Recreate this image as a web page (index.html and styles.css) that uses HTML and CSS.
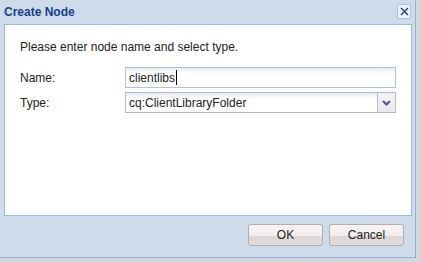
FILE: index.html
```html
<!DOCTYPE html>
<html lang="en">
<head>
  <meta charset="UTF-8">
  <title>Create Node</title>
  <link rel="stylesheet" href="styles.css">
</head>
<body>
  <div class="window">
    <div class="window-header">
      <span class="window-title">Create Node</span>
      <span class="close-btn">
        <svg width="9" height="9" viewBox="0 0 9 9">
          <path d="M1 1 L8 8 M8 1 L1 8" stroke="#15428b" stroke-width="1.4" fill="none"/>
        </svg>
      </span>
    </div>

    <div class="panel">
      <p class="intro">Please enter node name and select type.</p>
      <div class="form-row">
        <label>Name:</label>
        <div class="field focused"><span class="value">clientlibs</span><span class="caret"></span></div>
      </div>
      <div class="form-row">
        <label>Type:</label>
        <div class="field combo">
          <span class="value">cq:ClientLibraryFolder</span>
          <span class="trigger">
            <svg width="9" height="6" viewBox="0 0 9 6">
              <path d="M1 1 L4.5 4.5 L8 1" stroke="#3b5a94" stroke-width="2" fill="none"/>
            </svg>
          </span>
        </div>
      </div>
    </div>

    <div class="window-footer">
      <button>OK</button>
      <button>Cancel</button>
    </div>
  </div>
</body>
</html>
```

FILE: styles.css
```css
body {
  margin: 0;
  background-color: #d3d8de;
  font-family: 'Liberation Sans', Arial, sans-serif;
  font-size: 12px;
  color: #222;
}
.window {
  width: 415px;
  height: 257px;
  background-color: #cedbea;
  border-right: 1px solid #99b2d1;
  border-bottom: 1px solid #99b2d1;
  display: flex;
  flex-direction: column;
}
.window-header {
  height: 24px;
  flex: none;
  display: flex;
  align-items: center;
  justify-content: space-between;
  padding: 0 4px 0 4px;
}
.window-title {
  font-weight: bold;
  color: #15428b;
  font-size: 12px;
  margin-top: -1px;
}
.close-btn {
  width: 12px;
  height: 13px;
  border: 1px solid #a8c2e2;
  border-radius: 2px;
  background-color: #eef4fb;
  display: flex;
  align-items: center;
  justify-content: center;
  margin-top: -1px;
}
.panel {
  box-sizing: border-box;
  flex: none;
  margin: 0 3px 0 4px;
  height: 192px;
  background-color: #fff;
  border: 1px solid #99bbe8;
  padding: 15px 15px 0 15px;
}
.intro {
  margin: 0 0 12px 0;
  line-height: 15px;
}
.form-row {
  display: grid;
  grid-template-columns: 105px 271px;
  align-items: center;
  margin-bottom: 4px;
}
.field {
  box-sizing: border-box;
  height: 21px;
  border: 1px solid #b5b8c8;
  background: linear-gradient(#e9eef4, #fff 6px);
  display: flex;
  align-items: center;
  padding-left: 3px;
}
.field.focused {
  border-color: #a9c6e6;
}
.caret {
  width: 1px;
  height: 15px;
  background-color: #000;
  margin-left: 1px;
}
.combo {
  justify-content: space-between;
}
.trigger {
  width: 17px;
  height: 19px;
  border-left: 1px solid #b5b8c8;
  background: linear-gradient(#f4f4f6, #e8e8ee);
  display: flex;
  align-items: center;
  justify-content: center;
}
.window-footer {
  display: flex;
  justify-content: flex-end;
  gap: 6px;
  padding: 8px 11px 0 0;
}
button {
  width: 75px;
  height: 22px;
  border: 1px solid #bcaaaa;
  border-radius: 3px;
  background: linear-gradient(#f6f4f4, #f0eded 55%, #ded5d5 56%, #e4dcdc);
  font-family: 'Liberation Sans', Arial, sans-serif;
  font-size: 12px;
  color: #222;
  padding: 0;
}
```
